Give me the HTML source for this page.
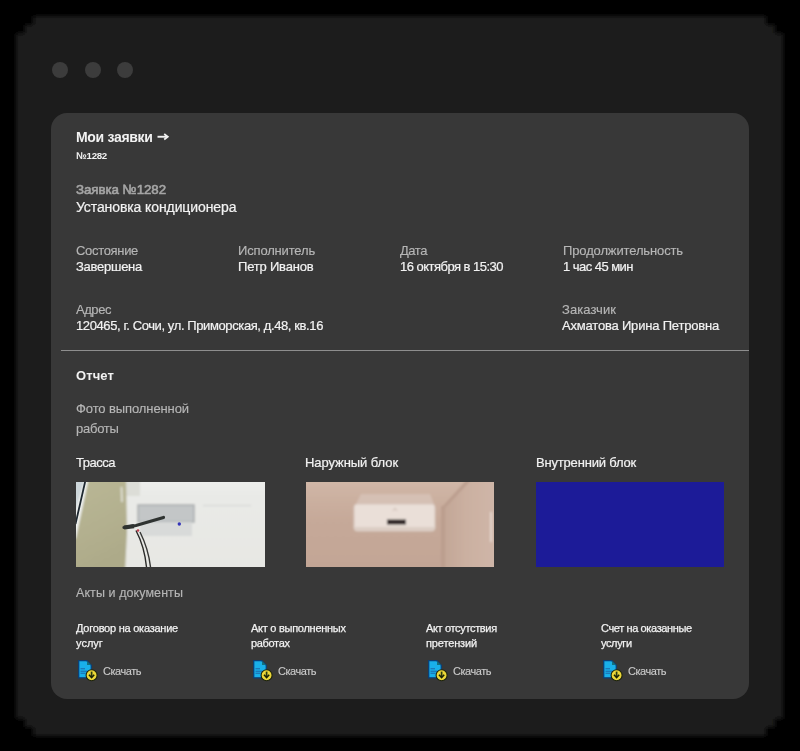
<!DOCTYPE html>
<html><head><meta charset="utf-8">
<style>
html,body{margin:0;padding:0;width:800px;height:751px;overflow:hidden;background:#000;}
body{position:relative;font-family:"Liberation Sans",sans-serif;}
.abs{position:absolute;}
.t{position:absolute;white-space:nowrap;line-height:1;will-change:transform;font-family:"Liberation Sans",sans-serif;}
.card{position:absolute;left:51px;top:113px;width:698px;height:586px;border-radius:16px;background:#383838;}
.dot{position:absolute;width:16px;height:16px;border-radius:50%;background:#3c3c3c;top:62px;}
.img{position:absolute;top:482px;height:85px;overflow:hidden;}
</style></head><body>
<svg class="abs" style="left:0;top:0" width="800" height="751">
<defs><filter id="fb" x="-5%" y="-5%" width="110%" height="110%"><feGaussianBlur stdDeviation="1.9"/></filter></defs>
<polygon filter="url(#fb)" fill="#1c1c1b" points="33.2,16.0 766.3,16.0 766.3,24.6 774.9,24.6 774.9,33.2 783.5,33.2 783.5,718.8 774.9,718.8 774.9,727.4 766.3,727.4 766.3,736.0 33.2,736.0 33.2,727.4 24.6,727.4 24.6,718.8 16.0,718.8 16.0,33.2 24.6,33.2 24.6,24.6 33.2,24.6"/>
</svg>
<div class="dot" style="left:51.5px"></div>
<div class="dot" style="left:84.5px"></div>
<div class="dot" style="left:117px"></div>
<div class="card"></div>
<div class="abs" style="left:61px;top:350px;width:688px;height:1px;background:#8e8e8e"></div>

<!-- image 1 -->
<div class="img" style="left:76px;width:189px">
<svg width="189" height="85" viewBox="0 0 189 85">
<defs>
<filter id="bl1" x="-20%" y="-20%" width="140%" height="140%"><feGaussianBlur stdDeviation="0.8"/></filter>
<linearGradient id="col1" x1="0" y1="0" x2="0.3" y2="1"><stop offset="0" stop-color="#bab896"/><stop offset="0.6" stop-color="#b3b08f"/><stop offset="1" stop-color="#adaa89"/></linearGradient>
<linearGradient id="wall1" x1="0" y1="0" x2="0" y2="1"><stop offset="0" stop-color="#eeefed"/><stop offset="0.2" stop-color="#e9eae7"/><stop offset="1" stop-color="#e7e7e3"/></linearGradient>
</defs>
<rect width="189" height="85" fill="#e8e8e4"/>
<g filter="url(#bl1)">
<rect x="-5" y="-5" width="200" height="95" fill="url(#wall1)"/>
<rect x="50" y="-5" width="14" height="19" fill="#dcddd7"/>
<polygon points="-5,-5 9.5,-5 -1,44 -5,44" fill="#cdd6da"/>
<polygon points="9.5,-5 13,-5 0,56 -5,58 -5,44" fill="#f0f2f0"/>
<polygon points="13,-5 50,-5 51,50 49,90 -5,90 -5,58 0,56" fill="url(#col1)"/>
<path d="M45.5 5 L46 20" stroke="#e6e6de" stroke-width="1.6"/>
<rect x="62" y="23" width="56" height="17" fill="#c3c6c7"/>
<rect x="62" y="23" width="56" height="17" fill="none" stroke="#a9adaf" stroke-width="1.5"/>
<rect x="64" y="40" width="52" height="14" fill="#d8dad9"/>
<path d="M127 23.6 H175" stroke="#d2d4d2" stroke-width="1"/>
</g>
<g>
<path d="M9.3 -1 L-0.5 42" stroke="#1e2830" stroke-width="1.8"/>
<path d="M48 45.5 L60 43.5 L87.5 35.5" stroke="#2f3331" stroke-width="3.2" fill="none" stroke-linecap="round"/>
<path d="M48 45.5 L58 44.2" stroke="#2f3331" stroke-width="4.2" fill="none"/>
<path d="M60 48.5 C65 58 69 70 70.5 85" stroke="#2a2a28" stroke-width="1.4" fill="none"/>
<path d="M64 50 C69 60 73 72 74.5 85" stroke="#363634" stroke-width="1.4" fill="none"/>
<circle cx="62" cy="48.5" r="1.3" fill="#c04050"/>
<circle cx="103.3" cy="42" r="1.7" fill="#3434b8"/>
</g>
</svg></div>

<!-- image 2 -->
<div class="img" style="left:306px;width:188px">
<svg width="188" height="85" viewBox="0 0 188 85">
<defs>
<filter id="bl2" x="-20%" y="-20%" width="140%" height="140%"><feGaussianBlur stdDeviation="1.3"/></filter>
<linearGradient id="w2" x1="0" y1="0" x2="0" y2="1"><stop offset="0" stop-color="#d2b9aa"/><stop offset="0.2" stop-color="#ccb1a1"/><stop offset="0.45" stop-color="#c6a999"/><stop offset="1" stop-color="#c2a595"/></linearGradient>
<linearGradient id="rw2" x1="0" y1="0" x2="1" y2="0"><stop offset="0" stop-color="#c2a696"/><stop offset="0.4" stop-color="#cbb0a1"/><stop offset="0.9" stop-color="#cfb6a8"/><stop offset="1" stop-color="#ddc9be"/></linearGradient>
</defs>
<rect width="188" height="85" fill="#c6a999"/>
<g filter="url(#bl2)">
<rect x="-5" y="-5" width="200" height="95" fill="url(#w2)"/>
<polygon points="162,-5 195,-5 195,90 137,90 137,24" fill="url(#rw2)"/>
<polygon points="137,24 162,-3 164,-1 139,26 139,90 135,90 135,24" fill="#bb9e8e"/>
<polygon points="55,12 124,12 128,22 50,22" fill="#d5c0b4"/>
<rect x="48" y="22" width="81" height="27" rx="3" fill="#eadfd8"/>
<rect x="48" y="22" width="81" height="27" rx="3" fill="none" stroke="#d6c6bc" stroke-width="1"/>
<rect x="49" y="45" width="79" height="3.5" fill="#dccdc4"/>
<rect x="81" y="37.5" width="19" height="5" fill="#2a2422"/>
<path d="M87 29 L89 26 L91 29" stroke="#c4b4aa" stroke-width="0.8" fill="none"/>
<rect x="184" y="30" width="2" height="30" fill="#e4d6ce"/>
</g>
</svg></div>

<!-- image 3 -->
<div class="img" style="left:536px;width:188px;background:#1c1b98"></div>

<!-- icons -->
<svg class="abs" style="left:0;top:0;overflow:visible" width="1" height="1">
<defs>
<g id="ic">
<path d="M0.7 0.7 H8.8 L13.3 5.2 V17.8 H0.7 Z" fill="#19b0ea" stroke="#0a3f78" stroke-width="1.3"/>
<path d="M9 1 L9 5 L13 5 Z" fill="#14707e"/>
<rect x="2.5" y="8.2" width="4.5" height="1.1" fill="#1d6db0"/>
<rect x="2.5" y="10.7" width="6.5" height="1.1" fill="#1d6db0"/>
<rect x="2.5" y="12.7" width="5" height="1.1" fill="#1d6db0"/>
<circle cx="13.6" cy="15.2" r="5.5" fill="#ecd838" stroke="#1c220c" stroke-width="1.1"/>
<path d="M13.6 11.6 V17" stroke="#2a3a12" stroke-width="1.7"/>
<path d="M11 14.8 L13.6 17.6 L16.2 14.8" stroke="#1a2208" stroke-width="1.5" fill="none"/>
</g>
</defs>
</svg>
<svg class="abs" style="left:77.5px;top:660px" width="22" height="22"><use href="#ic"/></svg>
<svg class="abs" style="left:252.5px;top:660px" width="22" height="22"><use href="#ic"/></svg>
<svg class="abs" style="left:427.5px;top:660px" width="22" height="22"><use href="#ic"/></svg>
<svg class="abs" style="left:602.5px;top:660px" width="22" height="22"><use href="#ic"/></svg>

<svg class="abs" style="left:155px;top:132px" width="16" height="10"><path d="M2.5 4.75 H11.5" stroke="#f2f2f2" stroke-width="1.9"/><path d="M9.2 2 L12.8 4.75 L9.2 7.5" stroke="#f2f2f2" stroke-width="1.7" fill="none"/></svg>
<div class="t" style="left:76px;top:129.95px;font-size:14px;font-weight:700;color:#f2f2f2;letter-spacing:-0.307px">Мои заявки</div>
<div class="t" style="left:76px;top:150.79px;font-size:9.7px;font-weight:700;color:#f2f2f2;letter-spacing:-0.272px">№1282</div>
<div class="t" style="left:76px;top:183.14px;font-size:13.3px;font-weight:400;color:#a6a6a6;letter-spacing:-0.062px;-webkit-text-stroke:0.6px #a6a6a6">Заявка №1282</div>
<div class="t" style="left:76px;top:199.85px;font-size:14px;font-weight:400;color:#f2f2f2;letter-spacing:-0.099px;-webkit-text-stroke:0.2px #f2f2f2">Установка кондиционера</div>
<div class="t" style="left:76px;top:243.50px;font-size:13px;font-weight:400;color:#b6b6b6;letter-spacing:-0.319px;-webkit-text-stroke:0.15px #b6b6b6">Состояние</div>
<div class="t" style="left:76px;top:259.50px;font-size:13px;font-weight:400;color:#f2f2f2;letter-spacing:-0.264px;-webkit-text-stroke:0.2px #f2f2f2">Завершена</div>
<div class="t" style="left:238px;top:243.50px;font-size:13px;font-weight:400;color:#b6b6b6;letter-spacing:-0.166px;-webkit-text-stroke:0.15px #b6b6b6">Исполнитель</div>
<div class="t" style="left:238px;top:259.50px;font-size:13px;font-weight:400;color:#f2f2f2;letter-spacing:-0.199px;-webkit-text-stroke:0.2px #f2f2f2">Петр Иванов</div>
<div class="t" style="left:400px;top:243.50px;font-size:13px;font-weight:400;color:#b6b6b6;letter-spacing:-0.449px;-webkit-text-stroke:0.15px #b6b6b6">Дата</div>
<div class="t" style="left:400px;top:259.50px;font-size:13px;font-weight:400;color:#f2f2f2;letter-spacing:-0.521px;-webkit-text-stroke:0.2px #f2f2f2">16 октября в 15:30</div>
<div class="t" style="left:563px;top:243.50px;font-size:13px;font-weight:400;color:#b6b6b6;letter-spacing:-0.130px;-webkit-text-stroke:0.15px #b6b6b6">Продолжительность</div>
<div class="t" style="left:563px;top:259.50px;font-size:13px;font-weight:400;color:#f2f2f2;letter-spacing:-0.535px;-webkit-text-stroke:0.2px #f2f2f2">1 час 45 мин</div>
<div class="t" style="left:76px;top:303.20px;font-size:13px;font-weight:400;color:#b6b6b6;letter-spacing:-0.444px;-webkit-text-stroke:0.15px #b6b6b6">Адрес</div>
<div class="t" style="left:76px;top:319.00px;font-size:13px;font-weight:400;color:#f2f2f2;letter-spacing:-0.394px;-webkit-text-stroke:0.2px #f2f2f2">120465, г. Сочи, ул. Приморская, д.48, кв.16</div>
<div class="t" style="left:562px;top:303.20px;font-size:13px;font-weight:400;color:#b6b6b6;letter-spacing:0.076px;-webkit-text-stroke:0.15px #b6b6b6">Заказчик</div>
<div class="t" style="left:562px;top:319.00px;font-size:13px;font-weight:400;color:#f2f2f2;letter-spacing:-0.192px;-webkit-text-stroke:0.2px #f2f2f2">Ахматова Ирина Петровна</div>
<div class="t" style="left:76px;top:368.60px;font-size:13px;font-weight:700;color:#f2f2f2;letter-spacing:0.109px">Отчет</div>
<div class="t" style="left:76px;top:402.20px;font-size:13px;font-weight:400;color:#b6b6b6;letter-spacing:-0.098px;-webkit-text-stroke:0.15px #b6b6b6">Фото выполненной</div>
<div class="t" style="left:76px;top:421.70px;font-size:13px;font-weight:400;color:#b6b6b6;letter-spacing:-0.259px;-webkit-text-stroke:0.15px #b6b6b6">работы</div>
<div class="t" style="left:76px;top:455.90px;font-size:13px;font-weight:400;color:#f2f2f2;letter-spacing:-0.484px;-webkit-text-stroke:0.2px #f2f2f2">Трасса</div>
<div class="t" style="left:305px;top:455.90px;font-size:13px;font-weight:400;color:#f2f2f2;letter-spacing:-0.073px;-webkit-text-stroke:0.2px #f2f2f2">Наружный блок</div>
<div class="t" style="left:536px;top:455.90px;font-size:13px;font-weight:400;color:#f2f2f2;letter-spacing:-0.185px;-webkit-text-stroke:0.2px #f2f2f2">Внутренний блок</div>
<div class="t" style="left:76px;top:587.32px;font-size:12.5px;font-weight:400;color:#b6b6b6;letter-spacing:0.080px;-webkit-text-stroke:0.15px #b6b6b6">Акты и документы</div>
<div class="t" style="left:76px;top:622.59px;font-size:11px;font-weight:400;color:#f2f2f2;letter-spacing:-0.238px;-webkit-text-stroke:0.25px #f2f2f2">Договор на оказание</div>
<div class="t" style="left:76px;top:638.29px;font-size:11px;font-weight:400;color:#f2f2f2;letter-spacing:0.000px;-webkit-text-stroke:0.25px #f2f2f2">услуг</div>
<div class="t" style="left:251px;top:622.59px;font-size:11px;font-weight:400;color:#f2f2f2;letter-spacing:-0.270px;-webkit-text-stroke:0.25px #f2f2f2">Акт о выполненных</div>
<div class="t" style="left:251px;top:638.29px;font-size:11px;font-weight:400;color:#f2f2f2;letter-spacing:-0.322px;-webkit-text-stroke:0.25px #f2f2f2">работах</div>
<div class="t" style="left:426px;top:622.59px;font-size:11px;font-weight:400;color:#f2f2f2;letter-spacing:-0.340px;-webkit-text-stroke:0.25px #f2f2f2">Акт отсутствия</div>
<div class="t" style="left:426px;top:638.29px;font-size:11px;font-weight:400;color:#f2f2f2;letter-spacing:-0.142px;-webkit-text-stroke:0.25px #f2f2f2">претензий</div>
<div class="t" style="left:601px;top:622.59px;font-size:11px;font-weight:400;color:#f2f2f2;letter-spacing:-0.380px;-webkit-text-stroke:0.25px #f2f2f2">Счет на оказанные</div>
<div class="t" style="left:601px;top:638.29px;font-size:11px;font-weight:400;color:#f2f2f2;letter-spacing:-0.376px;-webkit-text-stroke:0.25px #f2f2f2">услуги</div>
<div class="t" style="left:103px;top:665.69px;font-size:11px;font-weight:400;color:#cbcbcb;letter-spacing:-0.464px;-webkit-text-stroke:0.12px #cbcbcb">Скачать</div>
<div class="t" style="left:278px;top:665.69px;font-size:11px;font-weight:400;color:#cbcbcb;letter-spacing:-0.464px;-webkit-text-stroke:0.12px #cbcbcb">Скачать</div>
<div class="t" style="left:453px;top:665.69px;font-size:11px;font-weight:400;color:#cbcbcb;letter-spacing:-0.464px;-webkit-text-stroke:0.12px #cbcbcb">Скачать</div>
<div class="t" style="left:628px;top:665.69px;font-size:11px;font-weight:400;color:#cbcbcb;letter-spacing:-0.464px;-webkit-text-stroke:0.12px #cbcbcb">Скачать</div>
</body></html>
